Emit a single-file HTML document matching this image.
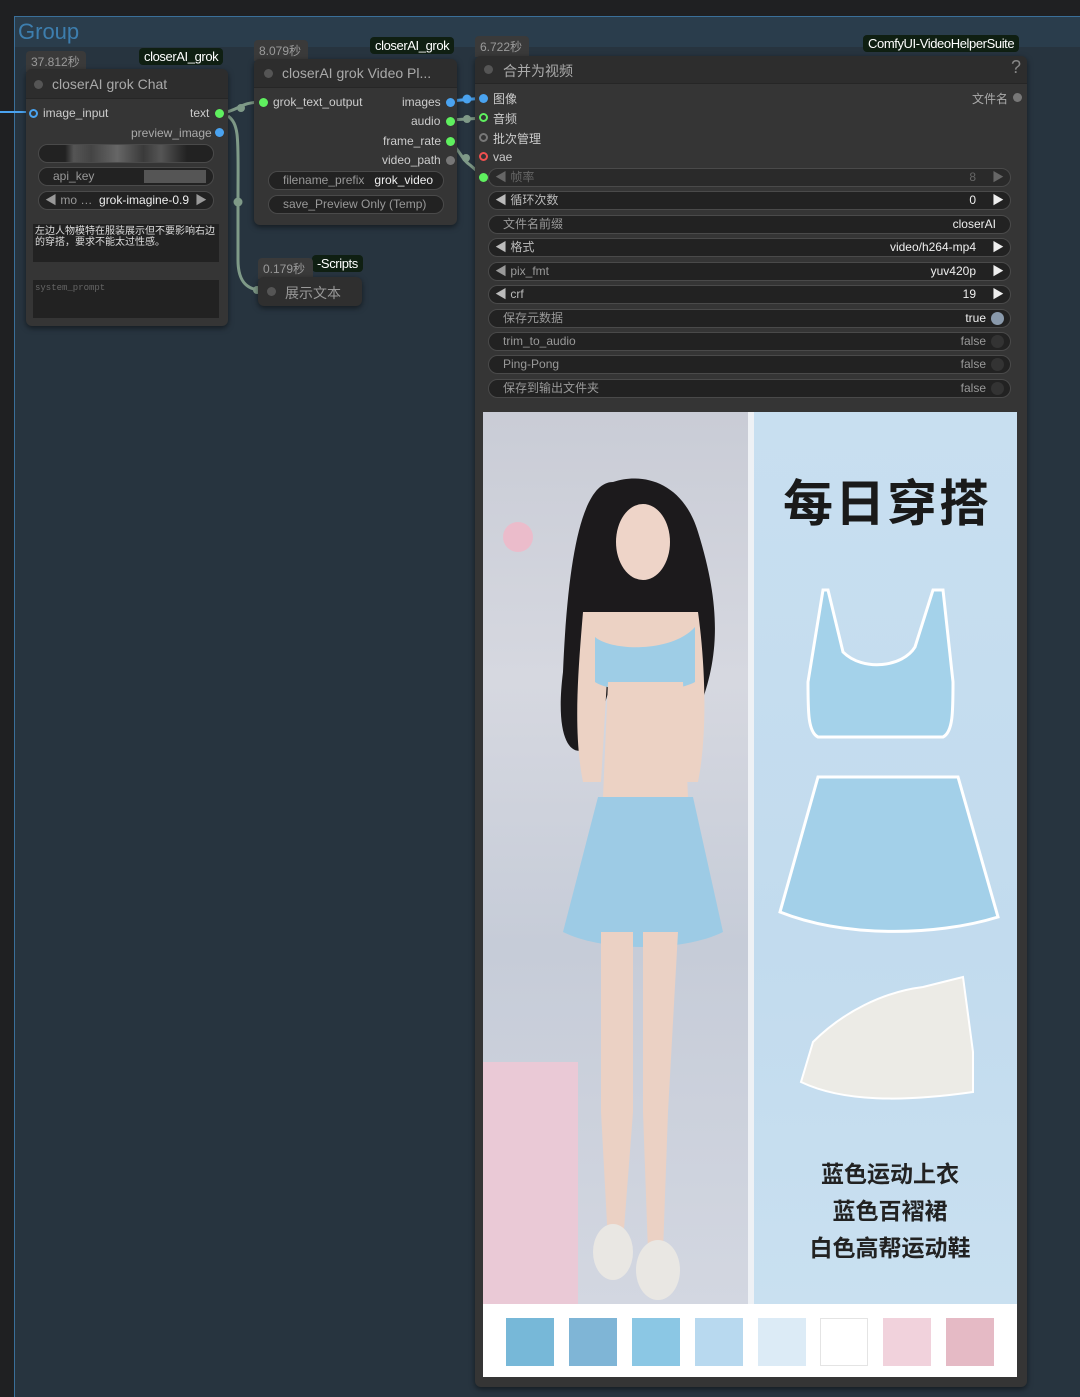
<!DOCTYPE html>
<html><head><meta charset="utf-8">
<style>
*{margin:0;padding:0;box-sizing:border-box}
body{width:1080px;height:1397px;background:#1f2022;position:relative;overflow:hidden;font-family:"Liberation Sans","Noto Sans CJK SC",sans-serif;color:#ddd}
.a{position:absolute}
.grp{left:14px;top:16px;width:1066px;height:1381px;background:#27343f;border-left:1px solid #3a6f99;border-top:1px solid #3a6f99}
.gtitle{left:15px;top:17px;width:1065px;height:30px;background:#2a3d4c}
.node{background:#353535;border-radius:6px;box-shadow:0 2px 6px rgba(0,0,0,.5)}
.nt{background:#2d2d2d;border-radius:6px 6px 0 0;border-bottom:1px solid #262626;color:#aaa;font-size:14px}
.badge{background:#3a3a3a;color:#9a9a9a;font-size:12px;border-radius:4px 4px 0 0;padding:2px 5px}
.tag{background:#0f1f12;color:#fff;font-size:13px;border-radius:4px;padding:1px 5px;letter-spacing:-.4px}
.dot{width:9px;height:9px;border-radius:50%}
.w{background:#222;border:1px solid #4a4a4a;border-radius:10px;height:19px;font-size:12px;color:#999;line-height:17px}
.lbl{font-size:12px;color:#ccc}
.sw{position:absolute;top:1318px;width:48px;height:48px}
</style></head><body>
<div class="a grp"></div>
<div class="a gtitle"></div>
<div class="a" style="left:18px;top:19px;font-size:22px;color:#3d7eae">Group</div>
<div class="a" style="left:0;top:111px;width:26px;height:2px;background:#4aa3f0"></div>

<svg class="a" style="left:0;top:0" width="1080" height="420">
<path d="M222 113 C240 110 240 102 262 102" stroke="#7f9a88" stroke-width="3" fill="none"/>
<path d="M228 116 C240 125 238 140 238 200 L238 260 C238 285 250 290 262 290" stroke="#7f9a88" stroke-width="3" fill="none"/>
<circle cx="241" cy="108" r="4" fill="#7f9a88"/><circle cx="238" cy="202" r="4.5" fill="#7f9a88"/><circle cx="257" cy="290" r="4" fill="#7f9a88"/>
<path d="M450 101 L484 98" stroke="#4aa3f0" stroke-width="3"/><circle cx="467" cy="99" r="4.5" fill="#4aa3f0"/>
<path d="M450 120 L484 118" stroke="#7f9a88" stroke-width="3"/><circle cx="467" cy="119" r="4" fill="#7f9a88"/>
<path d="M450 142 C460 150 462 160 470 165 L484 177" stroke="#7f9a88" stroke-width="3" fill="none"/><circle cx="466" cy="158" r="4" fill="#7f9a88"/>
</svg>

<!-- node 1 -->
<div class="a badge" style="left:26px;top:51px;width:60px">37.812秒</div>
<div class="a tag" style="left:139px;top:48px">closerAI_grok</div>
<div class="a node" style="left:26px;top:69px;width:202px;height:257px"></div>
<div class="a nt" style="left:26px;top:69px;width:202px;height:30px;padding:7px 0 0 26px">closerAI grok Chat</div>
<div class="a dot" style="left:34px;top:80px;background:#555"></div>
<div class="a dot" style="left:29px;top:109px;border:2px solid #4aa3f0;background:#353535"></div>
<div class="a lbl" style="left:43px;top:106px">image_input</div>
<div class="a lbl" style="left:190px;top:106px">text</div>
<div class="a dot" style="left:215px;top:109px;background:#5ff05f"></div>
<div class="a lbl" style="left:131px;top:126px;color:#aaa">preview_image</div>
<div class="a dot" style="left:215px;top:128px;background:#4aa3f0"></div>
<div class="a w" style="left:38px;top:144px;width:176px;background:linear-gradient(90deg,#222 15%,#555 20%,#444 30%,#666 45%,#3a3a3a 60%,#555 70%,#222 85%)"></div>
<div class="a w" style="left:38px;top:167px;width:176px;padding-left:14px">api_key<span style="position:absolute;left:105px;top:2px;width:62px;height:13px;background:#555"></span></div>
<div class="a w" style="left:38px;top:191px;width:176px;padding-left:6px">◀ mo …&nbsp; <span style="color:#eee">grok-imagine-0.9</span><span style="position:absolute;right:6px">▶</span></div>
<div class="a" style="left:33px;top:224px;width:186px;height:38px;background:#222;font-size:10px;line-height:11px;color:#ddd;padding:2px 2px">左边人物模特在服装展示但不要影响右边的穿搭，要求不能太过性感。</div>
<div class="a" style="left:33px;top:280px;width:186px;height:38px;background:#222;font-size:9px;color:#666;font-family:'Liberation Mono',monospace;padding:3px 2px">system_prompt</div>

<!-- node 2 -->
<div class="a badge" style="left:254px;top:40px;width:54px">8.079秒</div>
<div class="a tag" style="left:370px;top:37px">closerAI_grok</div>
<div class="a node" style="left:254px;top:59px;width:203px;height:166px"></div>
<div class="a nt" style="left:254px;top:59px;width:203px;height:29px;padding:6px 0 0 28px">closerAI grok Video Pl...</div>
<div class="a dot" style="left:264px;top:69px;background:#555"></div>
<div class="a dot" style="left:259px;top:98px;background:#5ff05f"></div>
<div class="a lbl" style="left:273px;top:95px">grok_text_output</div>
<div class="a lbl" style="left:402px;top:95px">images</div><div class="a dot" style="left:446px;top:98px;background:#4aa3f0"></div>
<div class="a lbl" style="left:411px;top:114px">audio</div><div class="a dot" style="left:446px;top:117px;background:#5ff05f"></div>
<div class="a lbl" style="left:383px;top:134px">frame_rate</div><div class="a dot" style="left:446px;top:137px;background:#5ff05f"></div>
<div class="a lbl" style="left:382px;top:153px">video_path</div><div class="a dot" style="left:446px;top:156px;background:#777"></div>
<div class="a w" style="left:268px;top:171px;width:176px;padding-left:14px">filename_prefix&nbsp;&nbsp; <span style="color:#eee">grok_video</span></div>
<div class="a w" style="left:268px;top:195px;width:176px;padding-left:14px">save_Preview Only (Temp)</div>

<!-- node 3 -->
<div class="a tag" style="left:312px;top:255px">-Scripts</div>
<div class="a badge" style="left:258px;top:258px;width:55px">0.179秒</div>
<div class="a node" style="left:258px;top:277px;width:104px;height:29px;background:#2f2f2f"></div>
<div class="a dot" style="left:267px;top:287px;background:#555"></div>
<div class="a" style="left:285px;top:283px;font-size:14px;color:#999">展示文本</div>

<!-- node 4 -->
<div class="a badge" style="left:475px;top:36px;width:54px">6.722秒</div>
<div class="a tag" style="left:863px;top:35px">ComfyUI-VideoHelperSuite</div>
<div class="a node" style="left:475px;top:56px;width:552px;height:1331px"></div>
<div class="a nt" style="left:475px;top:56px;width:552px;height:28px;padding:5px 0 0 28px">合并为视频<span style="position:absolute;right:6px;top:1px;font-size:18px;color:#888">?</span></div>
<div class="a dot" style="left:484px;top:65px;background:#555"></div>
<div class="a dot" style="left:479px;top:94px;background:#4aa3f0"></div><div class="a lbl" style="left:493px;top:90px">图像</div>
<div class="a dot" style="left:479px;top:113px;border:2px solid #5ff05f"></div><div class="a lbl" style="left:493px;top:110px">音频</div>
<div class="a dot" style="left:479px;top:133px;border:2px solid #777"></div><div class="a lbl" style="left:493px;top:130px">批次管理</div>
<div class="a dot" style="left:479px;top:152px;border:2px solid #f05050"></div><div class="a lbl" style="left:493px;top:150px">vae</div>
<div class="a lbl" style="left:972px;top:90px;color:#aaa">文件名</div><div class="a dot" style="left:1013px;top:93px;background:#777"></div>
<div class="a dot" style="left:479px;top:173px;background:#5ff05f"></div>
<div class="a w" style="left:488px;top:168px;width:523px;padding-left:6px;color:#666;background:#2a2a2a">◀ 帧率<span style="position:absolute;right:34px">8</span><span style="position:absolute;right:6px">▶</span></div>
<div class="a w" style="left:488px;top:191px;width:523px;padding-left:6px;color:#bbb">◀ 循环次数<span style="position:absolute;right:34px;color:#eee">0</span><span style="position:absolute;right:6px;color:#eee">▶</span></div>
<div class="a w" style="left:488px;top:215px;width:523px;padding-left:14px">文件名前缀<span style="position:absolute;right:14px;color:#eee">closerAI</span></div>
<div class="a w" style="left:488px;top:238px;width:523px;padding-left:6px;color:#bbb">◀ 格式<span style="position:absolute;right:34px;color:#eee">video/h264-mp4</span><span style="position:absolute;right:6px;color:#eee">▶</span></div>
<div class="a w" style="left:488px;top:262px;width:523px;padding-left:6px">◀ pix_fmt<span style="position:absolute;right:34px;color:#eee">yuv420p</span><span style="position:absolute;right:6px;color:#eee">▶</span></div>
<div class="a w" style="left:488px;top:285px;width:523px;padding-left:6px;color:#bbb">◀ crf<span style="position:absolute;right:34px;color:#eee">19</span><span style="position:absolute;right:6px;color:#eee">▶</span></div>
<div class="a w" style="left:488px;top:309px;width:523px;padding-left:14px">保存元数据<span style="position:absolute;right:24px;color:#eee">true</span><span style="position:absolute;right:6px;top:2px;width:13px;height:13px;border-radius:50%;background:#8a9aac"></span></div>
<div class="a w" style="left:488px;top:332px;width:523px;padding-left:14px">trim_to_audio<span style="position:absolute;right:24px">false</span><span style="position:absolute;right:6px;top:2px;width:13px;height:13px;border-radius:50%;background:#333"></span></div>
<div class="a w" style="left:488px;top:355px;width:523px;padding-left:14px">Ping-Pong<span style="position:absolute;right:24px">false</span><span style="position:absolute;right:6px;top:2px;width:13px;height:13px;border-radius:50%;background:#333"></span></div>
<div class="a w" style="left:488px;top:379px;width:523px;padding-left:14px">保存到输出文件夹<span style="position:absolute;right:24px">false</span><span style="position:absolute;right:6px;top:2px;width:13px;height:13px;border-radius:50%;background:#333"></span></div>

<!-- image -->
<div class="a" style="left:483px;top:412px;width:534px;height:965px;background:#fff;overflow:hidden">
 <div class="a" style="left:0;top:0;width:275px;height:892px;background:linear-gradient(180deg,#c9ccd6 0%,#d6d8e0 30%,#c6ccd8 60%,#d3d7e1 100%)"></div>
 <div class="a" style="left:0;top:650px;width:95px;height:242px;background:#eac9d6"></div>
 <div class="a" style="left:20px;top:110px;width:30px;height:30px;border-radius:50%;background:#ebbccb"></div>
 <div class="a" style="left:270px;top:0;width:264px;height:892px;background:linear-gradient(180deg,#c8dff0,#c2dbee 60%,#c9e0f0)"></div>
 <div class="a" style="left:265px;top:0;width:6px;height:892px;background:#eef1f5"></div>
 <svg class="a" style="left:0;top:0" width="534" height="892">
  <path d="M130 70 C100 70 85 140 80 260 C70 340 95 350 110 330 L150 200 L190 200 L215 300 C235 250 240 200 215 120 C200 70 160 60 130 70Z" fill="#1c1a1c"/>
  <ellipse cx="160" cy="130" rx="27" ry="38" fill="#eed4c8"/>
  <path d="M100 200 C95 260 90 320 100 370 L118 370 L125 250 C140 230 180 230 195 250 L200 370 L215 370 C225 320 222 250 215 200 Z" fill="#ecd2c4"/>
  <path d="M112 225 C130 240 190 240 212 215 L212 270 C190 282 130 282 112 270Z" fill="#9ecde6"/>
  <path d="M125 270 L200 270 L205 385 L120 385Z" fill="#ecd2c4"/>
  <path d="M115 385 L210 385 L240 520 C200 540 120 540 80 520 Z" fill="#9dcbe5"/>
  <path d="M118 520 L150 520 L150 700 L140 830 L125 830 L118 700Z" fill="#ebd1c4"/>
  <path d="M160 520 L195 520 L185 700 L180 840 L165 840 L160 700Z" fill="#ebd1c4"/>
  <ellipse cx="130" cy="840" rx="20" ry="28" fill="#e9e7e3"/>
  <ellipse cx="175" cy="858" rx="22" ry="30" fill="#e9e7e3"/>
  <path d="M345 178 L360 240 C380 260 420 255 432 235 L450 178 L460 178 L470 270 C470 300 470 320 460 325 L335 325 C325 320 325 300 325 270 L340 178Z" fill="#a4d2ea" stroke="#fff" stroke-width="3"/>
  <path d="M335 365 L475 365 L515 505 C450 525 360 525 297 500 Z" fill="#a3d0e9" stroke="#fff" stroke-width="3"/>
  <path d="M330 630 C360 600 400 580 440 575 L480 565 L490 640 L490 680 C420 690 360 690 318 670 Z" fill="#ecebe6" stroke="#fff" stroke-width="2"/>
 </svg>
 <div class="a" style="left:300px;top:52px;font-size:50px;font-weight:bold;color:#1a1a1a;letter-spacing:2px;font-family:'Noto Sans CJK SC',sans-serif">每日穿搭</div>
 <div class="a" style="left:300px;top:742px;width:214px;text-align:center;font-size:23px;font-weight:bold;color:#222;line-height:37px;font-family:'Noto Sans CJK SC',sans-serif">蓝色运动上衣<br>蓝色百褶裙<br>白色高帮运动鞋</div>
</div>
<div class="sw" style="left:506px;background:#77b8d8"></div>
<div class="sw" style="left:569px;background:#7fb5d6"></div>
<div class="sw" style="left:632px;background:#8bc7e4"></div>
<div class="sw" style="left:695px;background:#b8d9ef"></div>
<div class="sw" style="left:758px;background:#dcebf6"></div>
<div class="sw" style="left:820px;background:#fff;border:1px solid #e4e4e4"></div>
<div class="sw" style="left:883px;background:#f1d2dc"></div>
<div class="sw" style="left:946px;background:#e5bac5"></div>
</body></html>
